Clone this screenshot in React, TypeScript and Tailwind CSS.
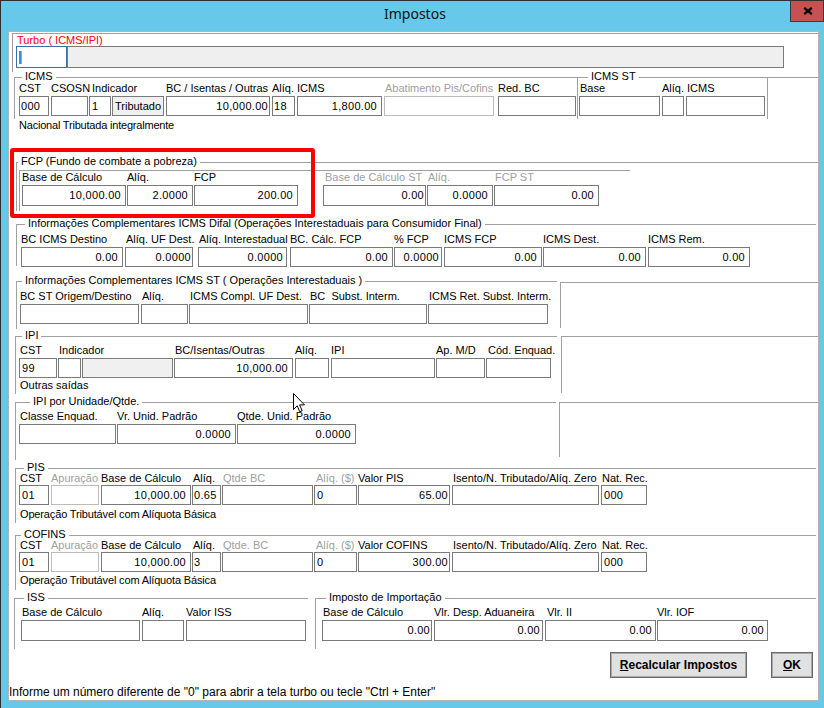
import type { ReactNode } from "react"

const SANS = "font-['Liberation_Sans',Arial,sans-serif]"

type Fld = {
  label?: string
  value?: string
  cls: string
  lcls?: string
  vcls?: string
  right?: boolean
  center?: boolean
  dl?: boolean
  dis?: boolean
  gray?: boolean
}

function Field({ f, h, gap }: { f: Fld; h: string; gap: string }) {
  const box = f.dis ? "border-[#bcbcbc]" : "border-[#7a7a7a]"
  const bg = f.gray ? "bg-[#f0f0f0]" : "bg-white"
  const align = f.right ? "justify-end" : f.center ? "justify-center" : "justify-start"
  const pad = f.vcls ?? (f.right ? "pr-[4px]" : f.center ? "" : "pl-[2px]")
  return (
    <div className={`flex shrink-0 flex-col ${f.cls}`}>
      <div className={`h-[11px] whitespace-pre leading-[11px] ${f.dl ? "text-[#a0a0a0]" : "text-black"} ${f.lcls ?? ""}`}>
        {f.label ?? ""}
      </div>
      <div className={`flex items-center overflow-hidden border leading-[13px] ${gap} ${h} ${box} ${bg} ${align} ${pad} ${f.center ? "" : "tracking-[0.3px]"}`}>
        {f.value}
      </div>
    </div>
  )
}

function Row({ fields, h = "h-[20px]", gap = "mt-[2px]", cls = "" }: { fields: Fld[]; h?: string; gap?: string; cls?: string }) {
  return (
    <div className={`flex items-start ${cls}`}>
      {fields.map((f, i) => (
        <Field key={i} f={f} h={h} gap={gap} />
      ))}
    </div>
  )
}

function Group({ title, cls, capCls, children }: { title?: string; cls: string; capCls: string; children?: ReactNode }) {
  return (
    <div className={`shrink-0 border-t border-l border-[#a0a0a0] ${cls}`}>
      {title && (
        <div className="flex h-0">
          <span className={`-mt-[7px] h-[11px] shrink-0 whitespace-pre bg-white px-[3px] leading-[11px] ${capCls}`}>{title}</span>
        </div>
      )}
      {children}
    </div>
  )
}

const icmsA: Fld[] = [
  { label: "CST", value: "000", cls: "ml-[4px] w-[30px]", vcls: "pl-[1px]" },
  { label: "CSOSN", cls: "ml-[2px] w-[37px]" },
  { label: "Indicador", value: "1", cls: "ml-[1px] w-[22px]", lcls: "pl-[3px]" },
  { value: "Tributado", cls: "ml-[1px] w-[52px]", gray: true, center: true },
  { label: "BC / Isentas / Outras", value: "10,000.00", cls: "ml-[2px] w-[104px]", right: true, vcls: "pr-[1px]" },
  { label: "Alíq. ICMS", value: "18", cls: "ml-[2px] w-[23px]", vcls: "pl-[1px]" },
  { value: "1,800.00", cls: "ml-[2px] w-[85px]", right: true },
  { label: "Abatimento Pis/Cofins", cls: "ml-[2px] w-[110px]", dl: true, dis: true, lcls: "pl-[1px]" },
  { label: "Red. BC", cls: "ml-[4px] w-[78px]" },
]

const icmsB: Fld[] = [
  { label: "Base", cls: "ml-[1px] w-[81px]", lcls: "pl-[1px]" },
  { label: "Alíq. ICMS", cls: "ml-[2px] w-[22px]" },
  { cls: "ml-[2px] w-[79px]" },
]

const fcp: Fld[] = [
  { label: "Base de Cálculo", value: "10,000.00", cls: "ml-[2px] w-[104px]", right: true },
  { label: "Alíq.", value: "2.0000", cls: "ml-[1px] w-[66px]", right: true },
  { label: "FCP", value: "200.00", cls: "ml-[1px] w-[104px]", right: true },
  { label: "Base de Cálculo ST", value: "0.00", cls: "ml-[25px] w-[103px]", right: true, dl: true, lcls: "pl-[2px]", vcls: "pr-[1px]" },
  { label: "Alíq.", value: "0.0000", cls: "ml-[1px] w-[66px]", right: true, dl: true, lcls: "pl-[1px]" },
  { label: "FCP ST", value: "0.00", cls: "ml-[1px] w-[105px]", right: true, dl: true, lcls: "pl-[1px]" },
]

const difal: Fld[] = [
  { label: "BC ICMS Destino", value: "0.00", cls: "ml-[4px] w-[102px]", right: true },
  { label: "Alíq. UF Dest.", value: "0.0000", cls: "ml-[2px] w-[68px]", right: true, lcls: "pl-[1px]", vcls: "pr-[1px]" },
  { label: "Alíq. Interestadual", value: "0.0000", cls: "ml-[5px] w-[89px]", right: true, lcls: "pl-[1px]", vcls: "pr-[3px]" },
  { label: "BC. Cálc. FCP", value: "0.00", cls: "ml-[3px] w-[103px]", right: true },
  { label: "% FCP", value: "0.0000", cls: "ml-[1px] w-[48px]", right: true, vcls: "pr-[2px]" },
  { label: "ICMS FCP", value: "0.00", cls: "ml-[2px] w-[98px]", right: true },
  { label: "ICMS Dest.", value: "0.00", cls: "ml-[1px] w-[103px]", right: true },
  { label: "ICMS Rem.", value: "0.00", cls: "ml-[2px] w-[102px]", right: true },
]

const stInter: Fld[] = [
  { label: "BC ST Origem/Destino", cls: "ml-[3px] w-[119px]" },
  { label: "Alíq.", cls: "ml-[2px] w-[47px]", lcls: "pl-[1px]" },
  { label: "ICMS Compl. UF Dest.", cls: "ml-[1px] w-[119px]", lcls: "pl-[1px]" },
  { label: "BC  Subst. Interm.", cls: "ml-[1px] w-[118px]", lcls: "pl-[1px]" },
  { label: "ICMS Ret. Subst. Interm.", cls: "ml-[1px] w-[120px]", lcls: "pl-[1px]" },
]

const ipi: Fld[] = [
  { label: "CST", value: "99", cls: "ml-[3px] w-[38px]", lcls: "pl-[1px]" },
  { label: "Indicador", cls: "ml-[1px] w-[23px]", lcls: "pl-[1px]" },
  { cls: "ml-[1px] w-[91px]", gray: true },
  { label: "BC/Isentas/Outras", value: "10,000.00", cls: "ml-[1px] w-[119px]", right: true, lcls: "pl-[1px]" },
  { label: "Alíq.", cls: "ml-[2px] w-[34px]" },
  { label: "IPI", cls: "ml-[2px] w-[104px]" },
  { label: "Ap. M/D", cls: "ml-[1px] w-[49px]" },
  { label: "Cód. Enquad.", cls: "ml-[1px] w-[65px]", lcls: "pl-[2px]" },
]

const ipiUnid: Fld[] = [
  { label: "Classe Enquad.", cls: "ml-[3px] w-[97px]", lcls: "pl-[1px]" },
  { label: "Vr. Unid. Padrão", value: "0.0000", cls: "ml-[1px] w-[119px]", right: true },
  { label: "Qtde. Unid. Padrão", value: "0.0000", cls: "ml-[1px] w-[119px]", right: true },
]

const contrib = (qtde: string, valLabel: string, aliq: string, valor: string): Fld[] => [
  { label: "CST", value: "01", cls: "ml-[3px] w-[30px]", lcls: "pl-[1px]" },
  { label: "Apuração", cls: "ml-[2px] w-[48px]", dl: true, dis: true },
  { label: "Base de Cálculo", value: "10,000.00", cls: "ml-[2px] w-[90px]", right: true },
  { label: "Alíq.", value: aliq, cls: "ml-[1px] w-[29px]", lcls: "pl-[1px]", vcls: "pl-[1px]" },
  { label: qtde, cls: "ml-[1px] w-[91px]", dl: true, lcls: "pl-[1px]" },
  { label: "Alíq. ($)", value: "0", cls: "ml-[1px] w-[43px]", dl: true, lcls: "pl-[2px]" },
  { label: valLabel, value: valor, cls: "ml-[1px] w-[92px]", right: true, vcls: "pr-[1px]" },
  { label: "Isento/N. Tributado/Alíq. Zero", cls: "ml-[2px] w-[147px]", lcls: "pl-[1px]" },
  { label: "Nat. Rec.", value: "000", cls: "ml-[2px] w-[46px]", lcls: "pl-[1px]" },
]

const iss: Fld[] = [
  { label: "Base de Cálculo", cls: "ml-[6px] w-[119px]", lcls: "pl-[1px]" },
  { label: "Alíq.", cls: "ml-[2px] w-[42px]" },
  { label: "Valor ISS", cls: "ml-[2px] w-[120px]" },
]

const importacao: Fld[] = [
  { label: "Base de Cálculo", value: "0.00", cls: "ml-[6px] w-[110px]", right: true, lcls: "pl-[1px]", vcls: "pr-[1px]" },
  { label: "Vlr. Desp. Aduaneira", value: "0.00", cls: "ml-[2px] w-[109px]", right: true, vcls: "pr-[2px]" },
  { label: "Vlr. II", value: "0.00", cls: "ml-[2px] w-[111px]", right: true, lcls: "pl-[2px]", vcls: "pr-[3px]" },
  { label: "Vlr. IOF", value: "0.00", cls: "ml-[1px] w-[111px]", right: true, vcls: "pr-[3px]" },
]

export default function App() {
  return (
    <div className={`relative flex h-[708px] w-[824px] flex-col overflow-hidden border-t border-l border-[#2f2f2f] bg-[#66c9ea] text-[11px] text-black ${SANS}`}>
      {/* title bar */}
      <div className="flex h-[30px] shrink-0 items-start">
        <div className="ml-[383px] mt-[3px] font-['Noto_Sans',sans-serif] text-[14px] leading-[20px] text-[#111]">Impostos</div>
        <div className="ml-auto flex h-[21px] w-[34px] items-center justify-center border-r border-b border-l border-[#3a3a3a] bg-[#c75050] pl-[2px]">
          <svg width="10" height="8" viewBox="0 0 10 8">
            <path d="M1.2 0.8 L8.8 7.2 M8.8 0.8 L1.2 7.2" stroke="#000" strokeWidth="2.2" />
          </svg>
        </div>
      </div>

      {/* client */}
      <div className="ml-[7px] flex h-[670px] w-[811px] shrink-0 flex-col border border-[#b4b4b4] bg-white">
        {/* turbo */}
        <div className="h-[40px] shrink-0">
          <div className="ml-[3px] mt-[1px] h-[39px] border-t border-l border-[#a0a0a0]">
            <div className="ml-[4px] h-[12px] leading-[12px] text-[#ff0000]">Turbo ( ICMS/IPI)</div>
            <div className="ml-[3px] flex">
              <div className="flex h-[22px] w-[51px] items-center border border-[#3c6fa0] bg-white pl-[2px]">
                <span className="h-[13px] w-[3px] border-r border-[#e8963a] bg-[#3a8ee6]" />
              </div>
              <div className="h-[22px] w-[717px] border border-[#7a7a7a] bg-[#efefef]" />
            </div>
          </div>
        </div>

        {/* ICMS */}
        <div className="flex h-[76px] shrink-0 items-start pt-[5px]">
          <Group title="ICMS" cls="ml-[5px] h-[42px] w-[563px]" capCls="ml-[7px]">
            <Row fields={icmsA} cls="mt-[5px]" />
            <div className="ml-[4px] mt-[3px] whitespace-nowrap leading-[13px] tracking-[-0.2px]">Nacional Tributada integralmente</div>
          </Group>
          <Group title="ICMS ST" cls="h-[42px] w-[191px] border-r" capCls="ml-[10px]">
            <Row fields={icmsB} cls="mt-[5px]" />
          </Group>
          <div className="h-0 flex-1 border-t border-[#a0a0a0]" />
        </div>

        {/* FCP */}
        <div className="relative h-[69px] shrink-0 pt-[14px]">
          <Group title="FCP (Fundo de combate a pobreza)" cls="ml-[7px] h-[49px] w-[802px]" capCls="ml-[1px]">
            <div className="ml-[2px] mt-[7px] h-[41px] w-[611px] border-t border-l border-[#a0a0a0]">
              <Row fields={fcp} h="h-[21px]" cls="mt-[1px]" />
            </div>
          </Group>
          <div className="pointer-events-none absolute left-[1px] top-0 h-[70px] w-[305px] rounded-[3px] border-[4px] border-[#ff0000]" />
        </div>

        {/* Difal */}
        <div className="h-[58px] shrink-0 pt-[7px]">
          <Group title="Informações Complementares ICMS Difal (Operações Interestaduais para Consumidor Final)" cls="ml-[7px] h-[42px] w-[800px]" capCls="ml-[8px]">
            <Row fields={difal} cls="mt-[9px]" />
          </Group>
        </div>

        {/* ICMS ST interestaduais */}
        <div className="flex h-[55px] shrink-0 items-start pt-[6px]">
          <Group title="Informações Complementares ICMS ST ( Operações Interestaduais )" cls="ml-[7px] h-[48px] w-[541px]" capCls="ml-[5px]">
            <Row fields={stInter} cls="mt-[9px]" />
          </Group>
          <div className="ml-[3px] mt-[1px] h-[46px] w-[258px] border-t border-l border-[#a0a0a0]" />
        </div>

        {/* IPI */}
        <div className="flex h-[66px] shrink-0 items-start pt-[6px]">
          <Group title="IPI" cls="ml-[6px] h-[58px] w-[542px]" capCls="ml-[6px]">
            <Row fields={ipi} cls="mt-[8px]" />
            <div className="ml-[4px] mt-[1px] leading-[13px]">Outras saídas</div>
          </Group>
          <div className="ml-[4px] h-[57px] w-[257px] border-t border-l border-[#a0a0a0]" />
        </div>

        {/* IPI por unidade */}
        <div className="flex h-[66px] shrink-0 items-start pt-[6px]">
          <Group title="IPI por Unidade/Qtde." cls="ml-[6px] h-[58px] w-[541px]" capCls="ml-[14px]">
            <Row fields={ipiUnid} cls="mt-[8px]" />
          </Group>
          <div className="ml-[3px] h-[55px] w-[259px] border-t border-l border-[#a0a0a0]" />
        </div>

        {/* PIS */}
        <div className="h-[67px] shrink-0 pt-[6px]">
          <Group title="PIS" cls="ml-[6px] h-[55px] w-[801px]" capCls="ml-[8px]">
            <Row fields={contrib("Qtde BC", "Valor PIS", "0.65", "65.00")} gap="mt-[1px]" cls="mt-[4px]" />
            <div className="ml-[4px] mt-[3px] whitespace-nowrap leading-[13px] tracking-[-0.15px]">Operação Tributável com Alíquota Básica</div>
          </Group>
        </div>

        {/* COFINS */}
        <div className="h-[63px] shrink-0 pt-[6px]">
          <Group title="COFINS" cls="ml-[6px] h-[55px] w-[801px]" capCls="ml-[5px]">
            <Row fields={contrib("Qtde. BC", "Valor COFINS", "3", "300.00")} gap="mt-[1px]" cls="mt-[4px]" />
            <div className="ml-[4px] mt-[2px] whitespace-nowrap leading-[13px] tracking-[-0.15px]">Operação Tributável com Alíquota Básica</div>
          </Group>
        </div>

        {/* ISS / Importação */}
        <div className="flex h-[58px] shrink-0 items-start pt-[6px]">
          <Group title="ISS" cls="ml-[5px] h-[51px] w-[294px]" capCls="ml-[9px]">
            <Row fields={iss} h="h-[21px]" cls="mt-[8px]" />
          </Group>
          <Group title="Imposto de Importação" cls="ml-[7px] h-[51px] w-[501px]" capCls="ml-[10px]">
            <Row fields={importacao} h="h-[21px]" cls="mt-[8px]" />
          </Group>
        </div>

        {/* buttons */}
        <div className="flex h-[32px] shrink-0 items-start pt-[2px]">
          <div className="ml-[601px] flex h-[26px] w-[137px] items-center justify-center border border-[#6b6b6b] bg-[#e1e1e1] text-[12px] font-bold shadow-[inset_0_0_0_1px_#a8a8a8]">
            <span>
              <span className="underline">R</span>ecalcular Impostos
            </span>
          </div>
          <div className="ml-[24px] flex h-[26px] w-[42px] items-center justify-center border border-[#6b6b6b] bg-[#e1e1e1] text-[12px] font-bold shadow-[inset_0_0_0_1px_#a8a8a8]">
            <span>
              <span className="underline">O</span>K
            </span>
          </div>
        </div>

        {/* status */}
        <div className="h-[18px] shrink-0 whitespace-nowrap pt-[2px] text-[12px] leading-[16px]">
          Informe um número diferente de "0" para abrir a tela turbo ou tecle "Ctrl + Enter"
        </div>
      </div>

      {/* mouse pointer */}
      <svg className="pointer-events-none absolute left-[292px] top-[392px]" width="13" height="20" viewBox="0 0 13 20">
        <path d="M0.5 0.5 L0.5 16.5 L4.2 12.8 L6.8 18.8 L9.2 17.8 L6.6 11.9 L11.5 11.9 Z" fill="#fff" stroke="#000" strokeWidth="1" strokeLinejoin="miter" />
      </svg>
    </div>
  )
}
